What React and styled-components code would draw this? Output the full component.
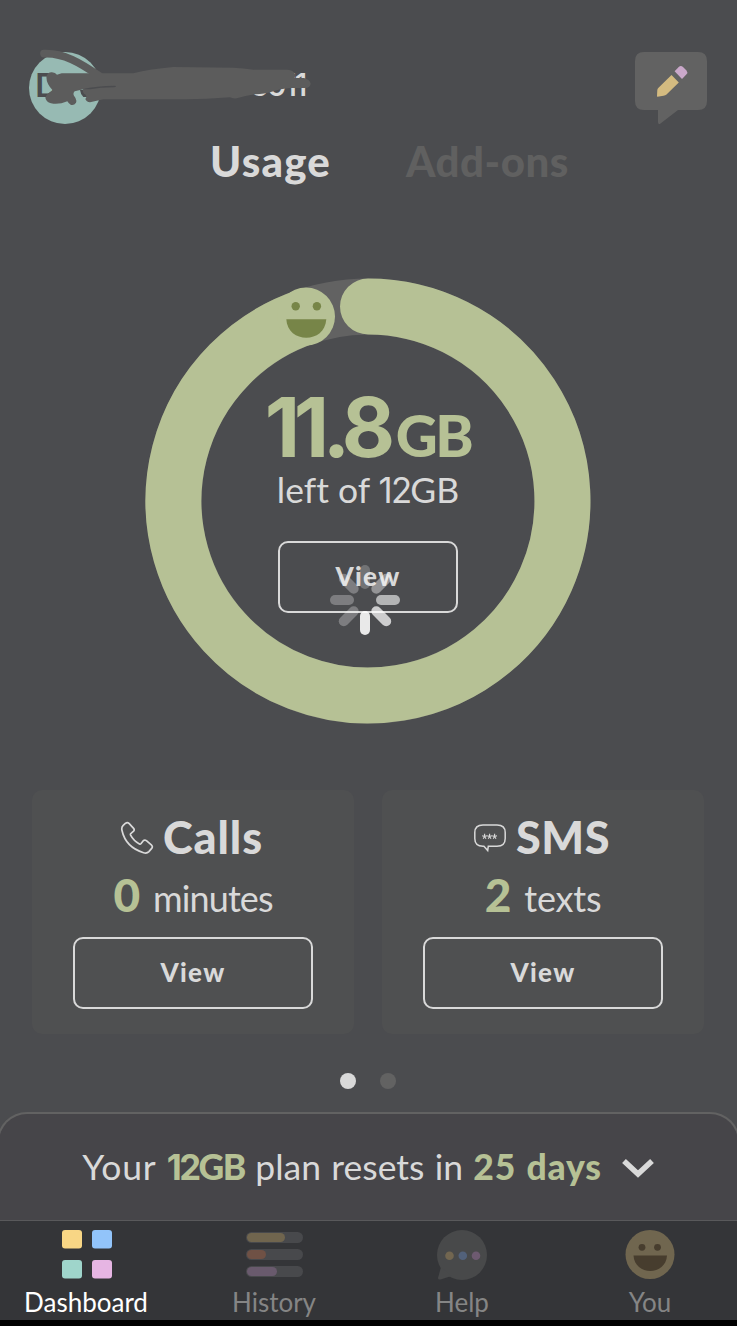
import React from 'react';
import styled, { createGlobalStyle } from 'styled-components';

const GlobalStyle = createGlobalStyle`
  * {
    box-sizing: border-box;
  }

  body {
    margin: 0;
    background: #000;
    font-family: Lato, 'Liberation Sans', sans-serif;
    font-variant-ligatures: none;
  }
`;

const spokes = [
  { angle: 0, opacity: 0.22 },
  { angle: 45, opacity: 0.4 },
  { angle: 90, opacity: 0.58 },
  { angle: 135, opacity: 0.72 },
  { angle: 180, opacity: 0.88 },
  { angle: 225, opacity: 0.28 },
  { angle: 270, opacity: 0.28 },
  { angle: 315, opacity: 0.28 },
];

const PhoneIcon = () => (
  <svg width="34" height="34" viewBox="0 0 34 34" fill="none" stroke="#d9d9d9" strokeWidth="1.7" strokeLinejoin="round">
    <path d="M5.6 2.2 Q7.4 0.9 9 2.4 L13.6 7.4 Q14.8 8.9 13.6 10.2 L11 12.4 Q10.1 13.1 10.6 14.2 C12.6 18 15.6 21 19.4 22.9 Q20.4 23.3 21.1 22.5 L23.3 19.7 Q24.7 18.4 26.4 19.6 L31.6 24.2 Q33 25.8 31.7 27.4 L28.9 30.6 Q26.9 32.7 23.6 31.7 C12.4 28.3 4.4 20.3 2 9.5 Q1.2 6.3 3.2 4.4 Z" />
  </svg>
);

const SmsIcon = () => (
  <svg width="34" height="34" viewBox="0 0 34 34" fill="none" stroke="#d9d9d9" strokeWidth="1.5">
    <path d="M10 4 H24 Q32.2 4 32.2 11.5 V17.5 Q32.2 25.2 24 25.2 H15.3 L14.7 29.6 L10.9 25.2 H10 Q1.8 25.2 1.8 17.5 V11.5 Q1.8 4 10 4 Z" />
    {[11.6, 16.6, 21.6].map((x) => (
      <path
        key={x}
        strokeWidth="1.1"
        d={`M${x} 12.7 V15.5 L${x - 2.4} 14.7 M${x} 15.5 L${x + 2.4} 14.7 M${x} 15.5 L${x - 1.4} 17.7 M${x} 15.5 L${x + 1.4} 17.7`}
      />
    ))}
  </svg>
);

const App = () => {
  return (
    <Screen>
      <GlobalStyle />
      <Header>
        <Profile>
          <Avatar />
          <Name>
            <Initial>D</Initial>
            <Digits $spacing={-2.6}>5011</Digits>
          </Name>
          <Scribble viewBox="87 48 900 198" fill="#5c5c5c">
            <path d="M240 180 H262 V201 H250 Q242 194 240 180 Z" fill="#4b4c4f" />
            <path d="M132 71 C190 68 240 98 298 138" fill="none" stroke="#5c5c5c" strokeWidth="23" strokeLinecap="round" />
            <path d="M140 137 Q145 126 156 127 Q166 128 171 134 L185 130 H400 Q450 117 520 111 L700 113 Q730 114 760 119 L862 119 Q882 121 886 134 L884 144 L912 144 Q930 149 932 161 Q930 174 915 174 H870 Q840 176 815 185 Q795 191 765 193 Q735 197 710 205 Q697 206 690 202 L620 206 L560 208 H310 L270 217 Q259 216 256 207 Q264 196 252 191 Q246 184 250 178 L224 184 Q218 190 222 197 Q232 209 228 218 Q222 227 212 224 Q205 220 202 214 Q176 225 153 220 Q138 215 136 203 Q140 191 158 181 Q136 158 140 137 Z" />
            <path d="M246 178 Q290 167 345 167 Q352 170 342 172 Q300 172 270 178 Z" fill="#4b4c4f" />
          </Scribble>
        </Profile>
        <EditBadge viewBox="0 0 72 74">
          <path d="M9 0 H63 Q72 0 72 9 V49 Q72 58 63 58 H43 L25.5 71.5 Q23 73 23 70 V58 H9 Q0 58 0 49 V9 Q0 0 9 0 Z" fill="#626262" />
          <path d="M36.5 23 L43.8 30.5 L31.5 42.5 Q30.5 43.5 28.5 43.7 L22.5 44.7 Q22 44.8 22 44 L22.3 38 Q22.5 36.7 23.5 35.7 Z" fill="#d4bb80" />
          <path d="M39.6 19.2 L43.7 15 Q45.8 13 48 15 L51.5 18.5 Q53.2 20.5 51.3 22.5 L47 26.9 Z" fill="#caa8ca" />
        </EditBadge>
      </Header>

      <Tabs>
        <Tab $active $spacing={1.2}>Usage</Tab>
        <Tab $spacing={0.5}>Add-ons</Tab>
      </Tabs>

      <Gauge>
        <Ring viewBox="0 0 446 446">
          <circle cx="223" cy="223" r="194.5" fill="none" stroke="#626262" strokeWidth="56" />
          <path
            d="M223 28.5 A194.5 194.5 0 1 1 160.5 38.8"
            fill="none"
            stroke="#b6c195"
            strokeWidth="56"
            strokeLinecap="round"
          />
          <circle cx="161" cy="38.5" r="29" fill="#b6c195" />
          <circle cx="150.7" cy="28.3" r="4.2" fill="#778548" />
          <circle cx="171.9" cy="28.3" r="4.2" fill="#778548" />
          <path d="M141.3 41.3 H181.3 C180 66 142.5 66 141.3 41.3 Z" fill="#778548" />
        </Ring>
        <Amount>
          <Value>11.8</Value>
          <Unit>GB</Unit>
        </Amount>
        <Total>
          left of <Digits $spacing={-1.8}>12</Digits>GB
        </Total>
        <ViewButton $width={180}>View</ViewButton>
        <Spinner viewBox="0 0 70 70">
          {spokes.map(({ angle, opacity }) => (
            <rect
              key={angle}
              x="30"
              y="0"
              width="10"
              height="24"
              rx="5"
              fill="#fff"
              fillOpacity={opacity}
              transform={`rotate(${angle} 35 35)`}
            />
          ))}
        </Spinner>
      </Gauge>

      <Cards>
        <Card>
          <CardTitle $spacing={0.9}>
            <PhoneIcon />
            <h2>Calls</h2>
          </CardTitle>
          <Count>
            <b>0</b>
            <Units $spacing={-0.9}>minutes</Units>
          </Count>
          <ViewButton $width={240}>View</ViewButton>
        </Card>
        <Card>
          <CardTitle $spacing={0.6}>
            <SmsIcon />
            <h2>SMS</h2>
          </CardTitle>
          <Count>
            <b>2</b>
            <Units $spacing={-0.2}>texts</Units>
          </Count>
          <ViewButton $width={240}>View</ViewButton>
        </Card>
      </Cards>

      <Pager>
        <Dot $active />
        <Dot />
      </Pager>

      <Plan>
        <p>
          <Lead>Your</Lead>{' '}
          <Highlight $spacing={-1.4}>
            <Digits $spacing={-2.6} $bold>
              12
            </Digits>
            GB
          </Highlight>{' '}
          plan resets in <Highlight $spacing={0.8}>25 days</Highlight>
        </p>
        <svg width="34" height="22" viewBox="0 0 34 22">
          <path d="M3 4 L17 17 L31 4" fill="none" stroke="#d9d9d9" strokeWidth="5.5" />
        </svg>
      </Plan>

      <Nav>
        <NavItem>
          <svg width="60" height="52" viewBox="0 0 60 52">
            <rect x="6" y="1" width="20" height="18.5" rx="3" fill="#f8d685" />
            <rect x="36" y="1" width="20" height="18.5" rx="3" fill="#92c4fa" />
            <rect x="6" y="31" width="20" height="18.5" rx="3" fill="#9fd5cb" />
            <rect x="36" y="31" width="20" height="18.5" rx="3" fill="#e6b5e3" />
          </svg>
          <Label $active>Dashboard</Label>
        </NavItem>
        <NavItem>
          <svg width="60" height="52" viewBox="0 0 60 52">
            <rect x="2" y="3" width="57" height="11" rx="5.5" fill="#48494c" />
            <rect x="3" y="4" width="38" height="9" rx="4.5" fill="#70654e" />
            <rect x="2" y="20" width="57" height="11" rx="5.5" fill="#48494c" />
            <rect x="3" y="21" width="19" height="9" rx="4.5" fill="#6f5145" />
            <rect x="2" y="37" width="57" height="11" rx="5.5" fill="#48494c" />
            <rect x="3" y="38" width="30" height="9" rx="4.5" fill="#695a6d" />
          </svg>
          <Label>History</Label>
        </NavItem>
        <NavItem>
          <svg width="60" height="52" viewBox="0 0 60 52">
            <circle cx="30" cy="26" r="25" fill="#48494a" />
            <path d="M9 38 L6 49 Q6 51 8.5 50.5 L19.5 47 Z" fill="#48494a" />
            <circle cx="17.5" cy="26.7" r="4.3" fill="#726650" />
            <circle cx="30.8" cy="26.7" r="4.3" fill="#52617a" />
            <circle cx="44" cy="26.7" r="4.3" fill="#6d5a70" />
          </svg>
          <Label>Help</Label>
        </NavItem>
        <NavItem>
          <svg width="60" height="52" viewBox="0 0 60 52">
            <circle cx="30" cy="25.5" r="24.5" fill="#70664f" />
            <circle cx="22" cy="18.3" r="3.4" fill="#473d2e" />
            <circle cx="37.5" cy="18.3" r="3.4" fill="#473d2e" />
            <path d="M13.5 26.5 H47 C46 47 14.5 47 13.5 26.5 Z" fill="#473d2e" />
          </svg>
          <Label>You</Label>
        </NavItem>
      </Nav>
    </Screen>
  );
};

const Screen = styled.div`
  display: flex;
  flex-direction: column;
  width: 737px;
  height: 1320px;
  overflow: hidden;
  background: #4b4c4f;
  color: #d9d9d9;
`;

const Header = styled.header`
  display: flex;
  justify-content: space-between;
  height: 135px;
  padding: 52px 30px 0 29px;
`;

const Profile = styled.div`
  position: relative;
  display: flex;
`;

const Avatar = styled.div`
  width: 72px;
  height: 72px;
  border-radius: 50%;
  background: #97bab3;
`;

const Name = styled.div`
  position: absolute;
  top: 13px;
  left: 6px;
  display: flex;
  justify-content: space-between;
  width: 270px;
  font-size: 32px;
  font-weight: 500;
  line-height: 40px;
`;

const Initial = styled.span`
  color: #4b4c4f;
  font-weight: 700;
`;

// Inter draws the 1 without a foot
const Digits = styled.span`
  font-family: Inter, sans-serif;
  font-size: 0.98em;
  font-weight: ${({ $bold }) => ($bold ? 700 : 'inherit')};
  letter-spacing: ${({ $spacing }) => $spacing}px;
`;

const Scribble = styled.svg`
  position: absolute;
  top: -6px;
  left: 0;
  width: 300px;
  height: 66px;
`;

const EditBadge = styled.svg`
  width: 72px;
  height: 74px;
`;

const Tabs = styled.div`
  display: flex;
  gap: 75px;
  height: 95px;
  padding-left: 210px;
`;

const Tab = styled.h1`
  margin: 0;
  color: ${({ $active }) => ($active ? '#d9d9d9' : '#606060')};
  font-size: 42px;
  font-weight: 900;
  letter-spacing: ${({ $spacing }) => $spacing}px;
  line-height: 52px;
`;

const Gauge = styled.section`
  position: relative;
  display: flex;
  flex-direction: column;
  align-items: center;
  height: 560px;
  padding: 148px 1px 0 0;
`;

const Ring = styled.svg`
  position: absolute;
  top: 48px;
  left: 145px;
  width: 446px;
  height: 446px;
`;

const Amount = styled.div`
  display: flex;
  align-items: baseline;
  gap: 7px;
  height: 97px;
  color: #b6c195;
  line-height: 100px;
`;

const Value = styled.span`
  font-family: Inter, sans-serif;
  font-size: 82px;
  font-weight: 700;
  letter-spacing: -6.3px;
`;

const Unit = styled.span`
  font-size: 58px;
  font-weight: 900;
  letter-spacing: -2.5px;
`;

const Total = styled.p`
  height: 66px;
  margin: 0;
  font-size: 35.5px;
  line-height: 30px;
`;

const ViewButton = styled.button`
  flex: none;
  width: ${({ $width }) => $width}px;
  height: 72px;
  padding: 0 0 2px;
  border: 2px solid #d9d9d9;
  border-radius: 10px;
  background: transparent;
  color: #d9d9d9;
  font-family: inherit;
  font-size: 26px;
  font-weight: 900;
  letter-spacing: 1.3px;
`;

const Spinner = styled.svg`
  position: absolute;
  top: 335px;
  left: 330px;
  width: 70px;
  height: 70px;
`;

const Cards = styled.section`
  display: flex;
  gap: 28px;
  padding: 0 33px 0 32px;
`;

const Card = styled.div`
  display: flex;
  flex: 1;
  flex-direction: column;
  align-items: center;
  height: 244px;
  padding-top: 21px;
  border-radius: 10px;
  background: #4f5051;
`;

const CardTitle = styled.div`
  display: flex;
  align-items: center;
  gap: 9px;
  height: 54px;
  padding-right: 3px;

  h2 {
    margin: 0;
    padding-bottom: 2px;
    font-size: 45px;
    font-weight: 900;
    letter-spacing: ${({ $spacing }) => $spacing}px;
  }
`;

const Count = styled.div`
  display: flex;
  align-items: baseline;
  gap: 13px;
  height: 72px;
  line-height: 60px;

  b {
    color: #b6c195;
    font-size: 46px;
    font-weight: 900;
  }
`;

const Units = styled.span`
  font-size: 36px;
  letter-spacing: ${({ $spacing }) => $spacing}px;
`;

const Pager = styled.div`
  display: flex;
  justify-content: center;
  gap: 24px;
  height: 78px;
  padding: 39px 1px 0 0;
`;

const Dot = styled.span`
  width: 16px;
  height: 16px;
  border-radius: 50%;
  background: ${({ $active }) => ($active ? '#d9d9d9' : '#626262')};
`;

const Plan = styled.section`
  display: flex;
  flex: none;
  align-items: center;
  justify-content: center;
  gap: 19px;
  height: 108px;
  margin: 0 -3px;
  border: 2px solid #626262;
  border-bottom: 0;
  border-radius: 30px 30px 0 0;
  background: #464549;

  p {
    margin: 0;
    font-size: 35.5px;
    line-height: 44px;
    white-space: nowrap;
    word-spacing: 1.2px;
  }

  svg {
    margin-top: 1px;
  }
`;

const Lead = styled.span`
  letter-spacing: 0.8px;
`;

const Highlight = styled.b`
  color: #b6c195;
  font-weight: 900;
  letter-spacing: ${({ $spacing }) => $spacing}px;
`;

const Nav = styled.nav`
  display: flex;
  flex: none;
  justify-content: space-between;
  height: 100px;
  padding: 8px 6px 0 5px;
  border-top: 1px solid #59595b;
  background: #343538;
`;

const NavItem = styled.div`
  display: flex;
  flex-direction: column;
  align-items: center;
  width: 162px;

  svg {
    flex: none;
  }
`;

const Label = styled.span`
  color: ${({ $active }) => ($active ? '#fff' : '#858585')};
  font-size: 26px;
  line-height: 43px;
`;

export default App;
